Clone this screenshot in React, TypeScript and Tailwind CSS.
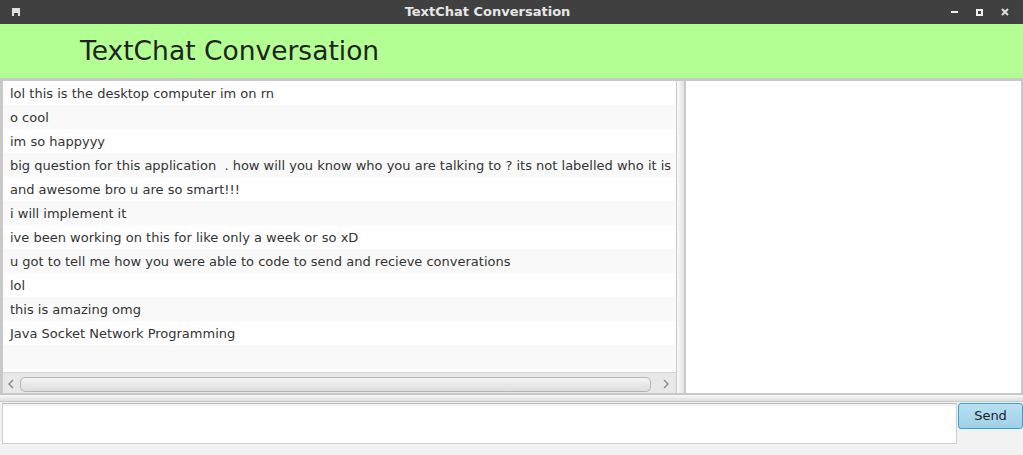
const messages = [
  "lol this is the desktop computer im on rn",
  "o cool",
  "im so happyyy",
  "big question for this application  . how will you know who you are talking to ? its not labelled who it is",
  "and awesome bro u are so smart!!!",
  "i will implement it",
  "ive been working on this for like only a week or so xD",
  "u got to tell me how you were able to code to send and recieve converations",
  "lol",
  "this is amazing omg",
  "Java Socket Network Programming",
  "",
];

export default function App() {
  return (
    <div className="w-[1023px] h-[455px] flex flex-col bg-[#f2f2f2] overflow-hidden font-['DejaVu_Sans',sans-serif]">
      {/* window title bar */}
      <div className="h-6 bg-[#404040] flex items-center justify-between px-3 text-[#e6e6e6]">
        <div className="w-2 h-2 bg-[#e0e0e0] flex items-end justify-center">
          <div className="w-1 h-[3px] bg-[#404040]" />
        </div>
        <span className="text-[13px] font-bold pl-1">TextChat Conversation</span>
        <div className="flex items-center gap-[18px] pr-0.5">
          <div className="w-[7px] h-[2px] bg-[#eee]" />
          <div className="w-[7px] h-[7px] border-2 border-[#eee]" />
          <svg width="8" height="8" viewBox="0 0 8 8">
            <path d="M1 1 L7 7 M7 1 L1 7" stroke="#ddd" strokeWidth="2" />
          </svg>
        </div>
      </div>

      {/* green header */}
      <div className="h-[54px] bg-[#b3ff94] flex items-center pl-20">
        <h1 className="text-[26.5px] text-[#222] leading-none pt-px">TextChat Conversation</h1>
      </div>

      {/* main split */}
      <div className="h-[317px] bg-[#c8c8c8] flex pt-[3px] pl-[3px] pr-0.5 pb-0.5">
        <div className="w-[673px] bg-white flex flex-col">
          <div className="flex-1 flex flex-col overflow-hidden">
            {messages.map((m, i) => (
              <div
                key={i}
                className={`h-6 shrink-0 flex items-center pl-[7px] pt-px text-[13px] text-[#333] whitespace-pre ${
                  i % 2 === 1 ? "bg-[#f9f9f9]" : "bg-white"
                }`}
              >
                {m}
              </div>
            ))}
          </div>
          <div className="h-[21px] bg-[#e8e8e8] border-t border-[#d4d4d4] flex items-center pl-0.5 pr-1 gap-[3px] pt-0.5">
            <svg width="12" height="12" viewBox="0 0 12 12">
              <path d="M8 2 L4 6 L8 10" stroke="#888" strokeWidth="1.4" fill="none" />
            </svg>
            <div className="flex-1 h-[15px] rounded-[5px] border border-[#b4b4b4] bg-gradient-to-b from-[#f4f4f4] to-[#dcdcdc]" />
            <div className="w-[3px]" />
            <svg width="12" height="12" viewBox="0 0 12 12">
              <path d="M4 2 L8 6 L4 10" stroke="#888" strokeWidth="1.4" fill="none" />
            </svg>
          </div>
        </div>
        <div className="w-[10px] flex">
          <div className="w-px" />
          <div className="w-[7px] bg-gradient-to-r from-[#fafafa] to-[#e2e2e2]" />
        </div>
        <div className="flex-1 bg-white" />
      </div>

      {/* input row */}
      <div className="flex-1 flex flex-col">
        <div className="h-[7px] bg-gradient-to-b from-[#f8f8f8] to-[#dedede] border-b border-[#c8c8c8]" />
        <div className="flex items-start pl-0.5 pt-px">
          <div className="w-[955px] h-[41px] bg-white border border-[#cfcfcf] border-t-[#bbb] shadow-[inset_0_2px_2px_rgba(0,0,0,0.06)]" />
          <button className="ml-px w-[65px] h-[26px] rounded-[3px] border border-[#2da3d8] bg-gradient-to-b from-[#b9e0f3] to-[#9fd0e8] text-[13px] text-[#222]">
            Send
          </button>
        </div>
      </div>
    </div>
  );
}
